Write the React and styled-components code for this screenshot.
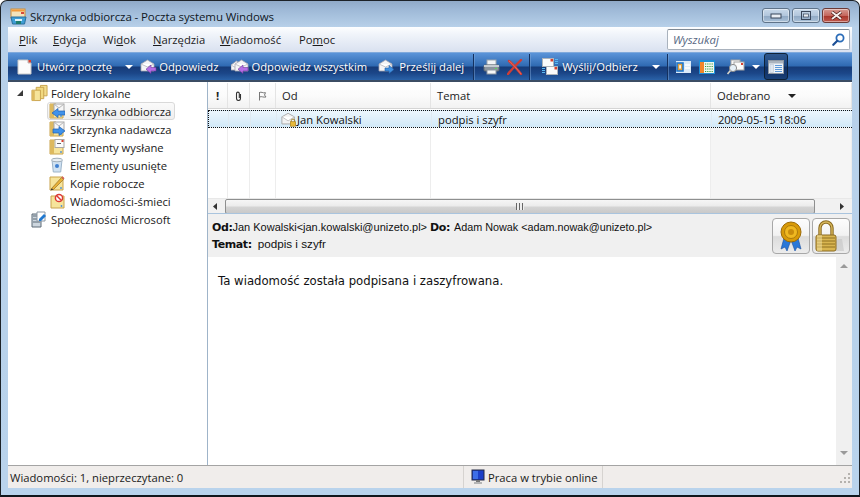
import React from "react";
import styled, { createGlobalStyle, css } from "styled-components";

const GlobalStyle = createGlobalStyle`
  html, body { margin: 0; padding: 0; height: 100%; background: #fff; overflow: hidden; }
  #root { height: 100%; }
  * { box-sizing: border-box; }
`;

const uiFont = `"Open Sans", "Noto Sans", "Liberation Sans", sans-serif`;

const Frame = styled.div`
  width: 860px;
  height: 497px;
  display: flex;
  flex-direction: column;
  border: 1px solid #1c2228;
  border-bottom: 2px solid #10161c;
  border-radius: 7px 7px 0 0;
  background: linear-gradient(180deg, #90aac8 0, #9db8d6 8px, #b7d0e9 26px, #b9d3ec 100%);
  padding: 0 7px 7px 7px;
  font-family: ${uiFont};
  font-size: 11.25px;
  color: #1a1a1a;
  overflow: hidden;
`;

const TitleBar = styled.div`
  height: 26px;
  flex: none;
  display: flex;
  align-items: center;
  padding: 4px 2px 0 2px;
`;

const TitleText = styled.div`
  margin-left: 3px;
  font-size: 11.5px;
  letter-spacing: -0.1px;
  color: #10181f;
  flex: 1;
`;

const WinButton = styled.div`
  width: 28px;
  height: 15px;
  margin-left: 2px;
  margin-top: -1px;
  border: 1px solid #5f7389;
  border-radius: 3px;
  display: flex;
  align-items: center;
  justify-content: center;
  background: linear-gradient(180deg, #c9d9ea 0, #b2c6dc 50%, #8fa8c3 52%, #a9c0d8 100%);
  box-shadow: inset 0 0 0 1px rgba(255, 255, 255, 0.45);
  ${(p) => p.$close && css`
    border-color: #6b3a36;
    background: linear-gradient(180deg, #d69a92 0, #c5675d 50%, #a8352b 52%, #c0584c 100%);
  `}
`;

const MenuRow = styled.div`
  height: 25px;
  flex: none;
  display: flex;
  align-items: center;
  background: linear-gradient(180deg, #fdfeff 0, #f0f4fa 30%, #d9e1f0 100%);
  padding-left: 11px;
  padding-right: 2px;
`;

const MenuItem = styled.span`
  width: ${(p) => p.$w}px;
  flex: none;
  color: #1b1b1b;
  u { text-underline-offset: 1px; }
`;

const SearchBox = styled.div`
  margin-left: auto;
  width: 183px;
  height: 21px;
  background: #fff;
  border: 1px solid #a9b2bd;
  border-top-color: #7f8994;
  border-radius: 2px;
  display: flex;
  align-items: center;
  justify-content: space-between;
  padding: 0 4px 0 5px;
  font-style: italic;
  color: #56667f;
`;

const Toolbar = styled.div`
  height: 30px;
  flex: none;
  display: flex;
  align-items: center;
  padding-left: 3px;
  color: #fff;
  border-top: 1px solid #7fa9dc;
  border-bottom: 2px solid #3b4c63;
  background: linear-gradient(180deg, #5b94d9 0, #2f6ab2 48%, #163b78 52%, #1b4688 75%, #2a62a8 100%);
`;

const ToolItem = styled.div`
  display: flex;
  align-items: center;
  gap: ${(p) => p.$gap ?? 3}px;
  margin-left: ${(p) => p.$ml ?? 0}px;
  white-space: nowrap;
  flex: none;
  text-shadow: 0 0 2px rgba(10, 30, 70, 0.6);
`;

const ToolSep = styled.div`
  width: 1px;
  height: 26px;
  flex: none;
  margin-left: ${(p) => p.$ml}px;
  background: #14315f;
  box-shadow: 1px 0 0 rgba(130, 170, 220, 0.45);
`;

const Caret = styled.span`
  flex: none;
  margin-left: ${(p) => p.$ml ?? 0}px;
  width: 0;
  height: 0;
  border-left: 4px solid transparent;
  border-right: 4px solid transparent;
  border-top: 4px solid ${(p) => p.$color ?? "#fff"};
`;

const ActiveTool = styled.div`
  width: 24px;
  height: 27px;
  flex: none;
  margin-left: ${(p) => p.$ml}px;
  display: flex;
  align-items: center;
  justify-content: center;
  border: 1px solid #0e2238;
  border-radius: 3px;
  background: rgba(12, 40, 84, 0.55);
`;

const Body = styled.div`
  flex: 1;
  min-height: 0;
  display: grid;
  grid-template-columns: 200px 1fr;
  background: #fff;
`;

const Sidebar = styled.div`
  border-right: 1px solid #9fb4c9;
  padding-top: 2px;
  background: #fff;
`;

const TreeRow = styled.div`
  height: 18px;
  display: flex;
  align-items: center;
  white-space: nowrap;
  gap: ${(p) => (p.$child ? 5 : 3)}px;
  margin-left: ${(p) => (p.$child ? 39 : 23)}px;
  padding-left: ${(p) => (p.$child ? 2 : 0)}px;
  width: ${(p) => (p.$selected ? "128px" : "auto")};
  ${(p) => p.$selected && css`
    background: linear-gradient(180deg, #fafafa, #efefef);
    border: 1px solid #d9d9d9;
    border-radius: 3px;
    padding-left: 1px;
  `}
`;

const TreeHead = styled.div`
  position: relative;
`;

const TreeArrow = styled.span`
  position: absolute;
  left: 9px;
  top: 6px;
  width: 0;
  height: 0;
  border-bottom: 6px solid #3a3a3a;
  border-left: 6px solid transparent;
`;

const Main = styled.div`
  min-width: 0;
  display: flex;
  flex-direction: column;
`;

const ListPane = styled.div`
  height: 116px;
  flex: none;
  display: flex;
  flex-direction: column;
  padding-top: 1px;
`;

const columns = "20px 22px 26px 155px 280px 1fr";

const HeadRow = styled.div`
  height: 26px;
  flex: none;
  display: grid;
  grid-template-columns: ${columns};
  background: linear-gradient(180deg, #fff 0, #fbfbfb 50%, #f2f2f2 100%);
  border-bottom: 1px solid #d5d5d5;
`;

const HeadCell = styled.div`
  display: flex;
  align-items: center;
  justify-content: ${(p) => (p.$center ? "center" : "flex-start")};
  padding-left: ${(p) => (p.$center ? 0 : 6)}px;
  border-right: 1px solid #e4e4e4;
  font-weight: ${(p) => (p.$bold ? 700 : 400)};
  color: #222;
`;

const MailRow = styled.div`
  height: 18px;
  flex: none;
  margin-top: 1px;
  display: grid;
  grid-template-columns: ${columns};
  background: linear-gradient(180deg, #ecf6fd 0, #d2e9f8 100%);
  border-top: 1px dotted #111;
  border-bottom: 1px dotted #111;
  border-left: 1px dotted #111;
`;

const MailCell = styled.div`
  display: flex;
  align-items: center;
  padding-left: ${(p) => p.$pl ?? 6}px;
  border-right: 1px solid ${(p) => (p.$plain ? "transparent" : "#dfeaf2")};
  white-space: nowrap;
  color: #111;
`;

const DateText = styled.span`
  letter-spacing: -0.15px;
`;

const FillRow = styled.div`
  flex: 1;
  display: grid;
  grid-template-columns: ${columns};
`;

const FillCell = styled.div`
  border-right: 1px solid #ededed;
  background: ${(p) => (p.$shade ? "#f5f5f5" : "#fff")};
`;

const HScroll = styled.div`
  height: 15px;
  flex: none;
  display: flex;
  align-items: center;
  background: #f1f1f1;
  border-top: 1px solid #e8e8e8;
`;

const ScrollArrowBox = styled.div`
  width: ${(p) => p.$w}px;
  flex: none;
  display: flex;
  align-items: center;
  justify-content: ${(p) => (p.$end ? "flex-end" : "center")};
  padding-right: ${(p) => (p.$end ? 3 : 0)}px;
`;

const HThumb = styled.div`
  flex: 1;
  height: 15px;
  border: 1px solid #8e8f8f;
  border-radius: 2px;
  background: linear-gradient(180deg, #f6f6f6 0, #ebebeb 48%, #d5d5d5 52%, #c9c9c9 100%);
  display: flex;
  align-items: center;
  justify-content: center;
`;

const Grip = styled.span`
  width: 8px;
  height: 7px;
  background: repeating-linear-gradient(90deg, #666 0, #666 1px, #eee 1px, #eee 3px);
`;

const Preview = styled.div`
  flex: 1;
  min-height: 0;
  display: flex;
  flex-direction: column;
  border-top: 1px solid #a9c4de;
`;

const PreviewHead = styled.div`
  height: 43px;
  flex: none;
  background: #f0f0f0;
  display: flex;
  justify-content: space-between;
  padding: 4px 2px 0 4px;
`;

const HeadLines = styled.div`
  display: flex;
  flex-direction: column;
  gap: 2px;
  padding-top: 3px;
  font-family: "Liberation Sans", Arial, sans-serif;
  font-size: 11px;
  color: #111;
`;

const HeadLine = styled.div`
  display: flex;
  align-items: baseline;
  height: 14px;
  white-space: nowrap;
`;

const Label = styled.b`
  font-family: "DejaVu Sans", sans-serif;
  font-size: 11px;
  font-weight: 700;
  margin-left: ${(p) => p.$ml ?? 0}px;
  margin-right: ${(p) => p.$mr ?? 0}px;
  letter-spacing: -0.4px;
`;

const RecipientText = styled.span`
  font-size: 10.8px;
`;

const SubjectText = styled.span`
  font-size: 11.7px;
`;

const Badges = styled.div`
  display: flex;
  gap: 2px;
`;

const Badge = styled.div`
  width: 38px;
  height: 36px;
  border: 1px solid #a8a8a8;
  border-radius: 4px;
  background: linear-gradient(180deg, #fdfdfd 0, #f2f2f2 48%, #dcdcdc 52%, #ececec 100%);
  display: flex;
  align-items: center;
  justify-content: center;
`;

const MessageWrap = styled.div`
  flex: 1;
  min-height: 0;
  display: flex;
`;

const MessageText = styled.div`
  flex: 1;
  padding: 17px 10px;
  font-family: "DejaVu Sans", sans-serif;
  font-size: 11.7px;
  color: #111;
`;

const VScroll = styled.div`
  width: 16px;
  flex: none;
  background: #f0f0f0;
  display: flex;
  flex-direction: column;
  justify-content: space-between;
  align-items: center;
  padding: 6px 0;
`;

const StatusBar = styled.div`
  height: 23px;
  flex: none;
  display: flex;
  align-items: center;
  background: #f0edeb;
  border-top: 1px solid #a4a4a4;
  position: relative;
  padding-left: 2px;
  color: #1a1a1a;
`;

const StatusPane = styled.div`
  width: ${(p) => p.$w}px;
  height: 100%;
  flex: none;
  display: flex;
  align-items: center;
  white-space: nowrap;
  gap: 1px;
  padding-left: ${(p) => p.$pl ?? 0}px;
  border-left: ${(p) => (p.$sep ? "1px solid #d6d3d0" : "none")};
  border-right: ${(p) => (p.$sep ? "1px solid #d6d3d0" : "none")};
`;

const Resize = styled.span`
  position: absolute;
  right: 1px;
  bottom: 1px;
`;

// ---- icons ----
const AppIcon = () => (
  <svg width="17" height="17" viewBox="0 0 17 17">
    <rect x="1" y="1" width="14" height="9" fill="#f3e3bb" stroke="#c98d3a" />
    <rect x="1.5" y="1.5" width="13" height="2" fill="#f29a3a" />
    <rect x="11" y="4" width="3" height="2" fill="#d8483a" />
    <path d="M1 9h15l-1.5 7h-12z" fill="#3f9fd6" stroke="#2a6f9c" />
    <rect x="5" y="11" width="7" height="2" fill="#dff3fb" />
    <rect x="6" y="13" width="5" height="3" fill="#1e7d6e" />
  </svg>
);

const Envelope = ({ x = 0, y = 0, w = 13, h = 10 }) => (
  <g>
    <path d={`M${x} ${y + 4}L${x + w / 2} ${y}L${x + w} ${y + 4}V${y + h}H${x}Z`} fill="#f4f4f6" stroke="#a4a4ae" strokeWidth="0.8" />
    <path d={`M${x} ${y + 4}L${x + w / 2} ${y + 7}L${x + w} ${y + 4}`} fill="#fff" stroke="#b5b5bd" strokeWidth="0.8" />
  </g>
);

const NewMail = () => (
  <svg width="15" height="16" viewBox="0 0 15 16">
    <path d="M1 1h10l3 3v11H1z" fill="#fbfbfb" stroke="#c9c9c9" />
    <path d="M11 1v3h3" fill="#dcdcdc" stroke="#bbb" />
    <rect x="11.5" y="1" width="2.5" height="2.5" fill="#d8402f" />
  </svg>
);

const ReplyIcon = ({ all, forward }) => (
  <svg width="19" height="16" viewBox="0 0 19 16">
    {all && <Envelope x={0} y={2} w={11} h={9} />}
    <Envelope x={all ? 4 : 2} y={1} w={13} h={11} />
    {forward ? (
      <path d="M8 9h4V6.5l5 4-5 4V12H8z" fill="#3f8fe0" stroke="#1e5ea8" strokeWidth="0.6" />
    ) : (
      <path d="M17 8.5h-5V6l-5 4.2 5 4.3V12h5z" fill="#b66ee6" stroke="#6f3a9a" strokeWidth="0.6" />
    )}
  </svg>
);

const PrintIcon = () => (
  <svg width="17" height="16" viewBox="0 0 17 16">
    <rect x="4" y="1" width="9" height="5" fill="#f2f4f6" stroke="#9aa4ae" />
    <rect x="1" y="6" width="15" height="6" rx="1" fill="#8a949e" stroke="#5f6972" />
    <rect x="1" y="6" width="15" height="2" fill="#c5cbd1" />
    <rect x="4" y="11" width="9" height="4" fill="#f6f6f6" stroke="#8e98a2" />
    <rect x="12" y="9" width="2" height="1" fill="#5bd65b" />
  </svg>
);

const DeleteIcon = () => (
  <svg width="16" height="16" viewBox="0 0 16 16">
    <path d="M2 2C6 5 10 10 14 15M14 1C10 5 5 10 1 15" stroke="#d03d35" strokeWidth="2.4" fill="none" strokeLinecap="round" />
    <path d="M2 2C6 5 10 10 14 15" stroke="#e9756c" strokeWidth="0.8" fill="none" />
  </svg>
);

const SendRecvIcon = () => (
  <svg width="17" height="17" viewBox="0 0 17 17">
    <rect x="0.5" y="0.5" width="11" height="8" fill="#fbfbfb" stroke="#aeb4ba" />
    <rect x="8.5" y="1" width="2.5" height="2.5" fill="#d8402f" />
    <rect x="4.5" y="8.5" width="11" height="8" fill="#fbfbfb" stroke="#aeb4ba" />
    <rect x="12.5" y="9" width="2.5" height="2.5" fill="#d8402f" />
    <path d="M13 1.5h3M13 3.5h3M13 5.5h3M0 10.5h3M0 12.5h3M0 14.5h3" stroke="#58b8f0" strokeWidth="1" />
  </svg>
);

const ContactsIcon = () => (
  <svg width="15" height="12" viewBox="0 0 15 12">
    <rect x="0" y="0" width="15" height="12" fill="#dcebf8" />
    <rect x="1" y="2" width="6" height="8" fill="#e2a13c" stroke="#1f78d0" strokeWidth="1.6" />
    <rect x="3.2" y="4.2" width="1.8" height="3.4" fill="#f4f4f4" />
    <path d="M9 4h5M9 7h5" stroke="#fff" strokeWidth="1.4" />
  </svg>
);

const CalendarIcon = () => (
  <svg width="16" height="14" viewBox="0 0 16 14">
    <rect x="0" y="0" width="16" height="14" fill="#1d8fd8" />
    <rect x="1" y="2" width="4" height="11" fill="#f0862a" />
    <rect x="5" y="2" width="10" height="11" fill="#eef7ee" />
    <path d="M6 4h8M6 6.5h8M6 9h8M6 11.5h8" stroke="#2f9a3e" strokeWidth="1.2" strokeDasharray="1.2 1" />
  </svg>
);

const FindIcon = () => (
  <svg width="18" height="16" viewBox="0 0 18 16">
    <rect x="4" y="1" width="9" height="8" fill="#f6f6f6" stroke="#a5a5a5" />
    <rect x="7" y="3" width="10" height="8" fill="#fbfbfb" stroke="#a5a5a5" />
    <rect x="14" y="4" width="2" height="2" fill="#d8402f" />
    <circle cx="6" cy="9" r="3.6" fill="#e6f0f8" stroke="#8a8a8a" />
    <path d="M3.5 11.5L0.5 15" stroke="#d8d4c8" strokeWidth="1.6" />
  </svg>
);

const LayoutIcon = () => (
  <svg width="16" height="14" viewBox="0 0 16 14">
    <rect x="0.5" y="0.5" width="15" height="13" fill="#eef3f9" stroke="#8d97a3" />
    <rect x="1" y="1" width="14" height="2.5" fill="#aab3bd" />
    <rect x="2" y="4.5" width="3.5" height="8" fill="#dfe7f0" stroke="#b5c0cc" strokeWidth="0.5" />
    <path d="M7 5.5h7M7 7.5h7M7 9.5h7M7 11.5h7" stroke="#5f9ad8" strokeWidth="1" />
  </svg>
);

const FolderBase = () => (
  <>
    <path d="M1 1h6l1 1h6v13H1z" fill="#f6e49b" stroke="#c9a34c" />
    <path d="M1 1h4v14H1z" fill="#ddb95f" />
    <circle cx="12" cy="13" r="0.9" fill="#4a90d8" />
  </>
);

const FoldersIcon = () => (
  <svg width="17" height="18" viewBox="0 0 18 18">
    <path d="M10 1h7v11h-7z" fill="#f3dd8c" stroke="#c9a34c" />
    <path d="M5.5 3h8v12h-8z" fill="#f1d97f" stroke="#c9a34c" />
    <path d="M1 6h9v11H1z" fill="#f6e49b" stroke="#c9a34c" />
    <path d="M1 6h3v11H1z" fill="#ddb95f" />
  </svg>
);

const InboxIcon = ({ out }) => (
  <svg width="16" height="16" viewBox="0 0 16 16">
    <FolderBase />
    <rect x="5" y="1" width="10" height="8" fill="#f6f6f6" stroke="#a8a8a8" />
    <path d="M5 1l5 4 5-4" fill="none" stroke="#b5b5b5" />
    {out ? (
      <path d="M4 8h6V5.5l6 4.5-6 4.5V12H4z" fill="#3f92ea" stroke="#1c5fb2" strokeWidth="0.7" />
    ) : (
      <path d="M16 8h-7V5.5L3 10l6 4.5V12h7z" fill="#3f92ea" stroke="#1c5fb2" strokeWidth="0.7" />
    )}
  </svg>
);

const SentIcon = () => (
  <svg width="16" height="16" viewBox="0 0 16 16">
    <FolderBase />
    <rect x="6" y="0.5" width="9" height="8" fill="#fcfcfc" stroke="#a8a8a8" />
    <rect x="12.5" y="1" width="2" height="2" fill="#d8402f" />
    <rect x="8" y="4" width="4" height="1" fill="#666" />
  </svg>
);

const TrashIcon = () => (
  <svg width="16" height="16" viewBox="0 0 16 16">
    <path d="M3 3h10l-1.3 12H4.3z" fill="#cfe1f2" stroke="#9db4c9" />
    <ellipse cx="8" cy="3" rx="5.5" ry="1.8" fill="#e8eef4" stroke="#a2afba" />
    <circle cx="8" cy="9" r="2" fill="#3f7fd0" />
  </svg>
);

const DraftIcon = () => (
  <svg width="16" height="16" viewBox="0 0 16 16">
    <path d="M1 2h13v13H1z" fill="#f6e49b" stroke="#c9a34c" />
    <circle cx="12" cy="13" r="0.9" fill="#4a90d8" />
    <path d="M2.5 13.5L12.5 2.5l2 2-10 10z" fill="#e8b23a" stroke="#8a6418" strokeWidth="0.6" />
    <path d="M12.5 2.5l2 2 1-1.2-2-2z" fill="#d8605a" />
    <path d="M2.5 13.5l-1 2 3-1z" fill="#333" />
  </svg>
);

const JunkIcon = () => (
  <svg width="16" height="16" viewBox="0 0 16 16">
    <path d="M2 3h13v12H2z" fill="#f6e49b" stroke="#c9a34c" />
    <circle cx="12.5" cy="13" r="0.9" fill="#4a90d8" />
    <circle cx="10" cy="5" r="3.6" fill="#fff" stroke="#dc3a34" strokeWidth="1.5" />
    <path d="M7.5 2.5l5 5" stroke="#dc3a34" strokeWidth="1.5" />
  </svg>
);

const CommunityIcon = () => (
  <svg width="17" height="17" viewBox="0 0 17 17">
    <path d="M1 3h9v13H1z" fill="#cdd6de" stroke="#5d6a76" />
    <path d="M2 5h7M2 8h7M2 11h7" stroke="#5d6a76" strokeWidth="1" />
    <path d="M6 1h8v9H6z" fill="#fff" stroke="#8b97a3" />
    <path d="M8 8l5-5 2 2-5 5H8z" fill="#1f78d0" />
  </svg>
);

const MailLockIcon = () => (
  <svg width="16" height="15" viewBox="0 0 18 16">
    <path d="M1 5L8 1l7 4v8H1z" fill="#f2f2f2" stroke="#a5a5a5" />
    <path d="M1 5l7 4.5L15 5" fill="#fff" stroke="#bdbdbd" />
    <path d="M11.5 11V9.5a2 2 0 0 1 4 0V11" fill="none" stroke="#9b7a20" />
    <rect x="10.5" y="10.5" width="6" height="5" fill="#e8b93a" stroke="#a57d18" strokeWidth="0.7" />
  </svg>
);

const Magnifier = () => (
  <svg width="13" height="13" viewBox="0 0 13 13">
    <circle cx="8" cy="5" r="3.6" fill="#fff" stroke="#2b6cb8" strokeWidth="1.8" />
    <path d="M5.3 7.8L1.3 11.8" stroke="#1d4f95" strokeWidth="2.2" strokeLinecap="round" />
  </svg>
);

const ClipIcon = () => (
  <svg width="7" height="10" viewBox="0 0 7 10">
    <path d="M5.5 3v4.5a2 2 0 0 1-4 0V2.5a1.4 1.4 0 0 1 2.8 0V7" fill="none" stroke="#333" strokeWidth="1.1" />
  </svg>
);

const FlagIcon = () => (
  <svg width="10" height="10" viewBox="0 0 10 10">
    <path d="M1.5 1v8.5M1.5 1.5c2-1 3 .8 6 .2L6.5 4l1.5 2c-3 .6-4-1-6.5 0" fill="none" stroke="#777" strokeWidth="1" />
  </svg>
);

const Rosette = () => (
  <svg width="34" height="34" viewBox="0 0 34 34">
    <path d="M10 19L7 30l4-2 2 4 4-11zM24 19l3 11-4-2-2 4-4-11z" fill="#2a78d8" stroke="#174e9e" strokeWidth="0.6" />
    <circle cx="17" cy="13" r="10" fill="#d89a08" stroke="#9c6a06" />
    <circle cx="17" cy="13" r="6.5" fill="#efb820" stroke="#ad7a0c" />
    <circle cx="17" cy="13" r="3" fill="#c98c0c" />
  </svg>
);

const Lock = () => (
  <svg width="34" height="34" viewBox="0 0 34 34">
    <path d="M24 20h4l2 12H14z" fill="#bdbdbd" opacity="0.5" />
    <path d="M6 17V9a6 6 0 0 1 12 0v8" fill="none" stroke="#8a6a20" strokeWidth="3.4" />
    <path d="M6 17V9a6 6 0 0 1 12 0v8" fill="none" stroke="#d6b65a" strokeWidth="1.4" />
    <rect x="2" y="16" width="20" height="16" rx="2" fill="#d9b550" stroke="#8a6a20" />
    <path d="M3 19h18M3 22h18M3 25h18M3 28h18" stroke="#8f7020" strokeWidth="1" />
    <rect x="3" y="16" width="5" height="16" fill="#f6e6a8" opacity="0.5" />
  </svg>
);

const MonitorIcon = () => (
  <svg width="16" height="16" viewBox="0 0 16 16">
    <rect x="1" y="1" width="12" height="10" fill="#1c3fc8" stroke="#232a44" />
    <path d="M2 2h5v8H2z" fill="#3d6ee8" />
    <rect x="5" y="11" width="4" height="2" fill="#777" />
    <rect x="3" y="13" width="8" height="2" fill="#b5b5b5" />
  </svg>
);

const MinGlyph = () => (
  <svg width="12" height="7" viewBox="0 0 12 7">
    <rect x="1" y="2" width="10" height="4" fill="#e9eef4" stroke="#39465a" />
  </svg>
);

const MaxGlyph = () => (
  <svg width="10" height="9" viewBox="0 0 10 9">
    <rect x="0.5" y="0.5" width="9" height="8" fill="none" stroke="#39465a" strokeWidth="1" />
    <rect x="2.5" y="3" width="5" height="3" fill="#e9eef4" stroke="#39465a" strokeWidth="0.7" />
  </svg>
);

const CloseGlyph = () => (
  <svg width="13" height="9" viewBox="0 0 13 9">
    <path d="M2 1l9 7M11 1L2 8" stroke="#3a1512" strokeWidth="3.2" />
    <path d="M2 1l9 7M11 1L2 8" stroke="#f6ecea" strokeWidth="2" />
  </svg>
);

const SmallArrow = ({ dir }) => {
  const d = { left: "M5 1L1 4.5 5 8z", right: "M1 1l4 3.5L1 8z", up: "M1 5l4-4 4 4z", down: "M1 1l4 4 4-4z" }[dir];
  return (
    <svg width="10" height="9" viewBox="0 0 10 9">
      <path d={d} fill={dir === "up" || dir === "down" ? "#9a9a9a" : "#333"} />
    </svg>
  );
};

const ResizeGrip = () => (
  <svg width="11" height="11" viewBox="0 0 11 11" fill="#b5b2ae">
    <rect x="8" y="8" width="2" height="2" />
    <rect x="4" y="8" width="2" height="2" />
    <rect x="0" y="8" width="2" height="2" />
    <rect x="8" y="4" width="2" height="2" />
    <rect x="4" y="4" width="2" height="2" />
    <rect x="8" y="0" width="2" height="2" />
  </svg>
);

const menu = [
  { w: 34, label: <><u>P</u>lik</> },
  { w: 50, label: <><u>E</u>dycja</> },
  { w: 50, label: <>Wi<u>d</u>ok</> },
  { w: 67, label: <><u>N</u>arzędzia</> },
  { w: 79, label: <><u>W</u>iadomość</> },
  { w: 50, label: <>Po<u>m</u>oc</> },
];

const folders = [
  { icon: <InboxIcon />, name: "Skrzynka odbiorcza", selected: true },
  { icon: <InboxIcon out />, name: "Skrzynka nadawcza" },
  { icon: <SentIcon />, name: "Elementy wysłane" },
  { icon: <TrashIcon />, name: "Elementy usunięte" },
  { icon: <DraftIcon />, name: "Kopie robocze" },
  { icon: <JunkIcon />, name: "Wiadomości-śmieci" },
];

export default function App() {
  return (
    <>
      <GlobalStyle />
      <Frame>
        <TitleBar>
          <AppIcon />
          <TitleText>Skrzynka odbiorcza - Poczta systemu Windows</TitleText>
          <WinButton><MinGlyph /></WinButton>
          <WinButton><MaxGlyph /></WinButton>
          <WinButton $close><CloseGlyph /></WinButton>
        </TitleBar>

        <MenuRow>
          {menu.map((m, i) => (
            <MenuItem key={i} $w={m.w}>{m.label}</MenuItem>
          ))}
          <SearchBox>
            Wyszukaj
            <Magnifier />
          </SearchBox>
        </MenuRow>

        <Toolbar>
          <ToolItem $ml={6} $gap={5}><NewMail />Utwórz pocztę</ToolItem>
          <Caret $ml={13} />
          <ToolItem $ml={6} $gap={1}><ReplyIcon />Odpowiedz</ToolItem>
          <ToolItem $ml={13} $gap={1}><ReplyIcon all />Odpowiedz wszystkim</ToolItem>
          <ToolItem $ml={10}><ReplyIcon forward />Prześlij dalej</ToolItem>
          <ToolSep $ml={9} />
          <ToolItem $ml={9}><PrintIcon /></ToolItem>
          <ToolItem $ml={7}><DeleteIcon /></ToolItem>
          <ToolSep $ml={6} />
          <ToolItem $ml={12} $gap={3}><SendRecvIcon />Wyślij/Odbierz</ToolItem>
          <Caret $ml={14} />
          <ToolSep $ml={7} />
          <ToolItem $ml={8}><ContactsIcon /></ToolItem>
          <ToolItem $ml={8}><CalendarIcon /></ToolItem>
          <ToolItem $ml={12}><FindIcon /></ToolItem>
          <Caret $ml={7} />
          <ActiveTool $ml={4}><LayoutIcon /></ActiveTool>
        </Toolbar>

        <Body>
          <Sidebar>
            <TreeHead>
              <TreeArrow />
              <TreeRow><FoldersIcon />Foldery lokalne</TreeRow>
            </TreeHead>
            {folders.map((f) => (
              <TreeRow key={f.name} $child $selected={f.selected}>
                {f.icon}
                {f.name}
              </TreeRow>
            ))}
            <TreeRow><CommunityIcon />Społeczności Microsoft</TreeRow>
          </Sidebar>

          <Main>
            <ListPane>
              <HeadRow>
                <HeadCell $center $bold>!</HeadCell>
                <HeadCell $center><ClipIcon /></HeadCell>
                <HeadCell $center><FlagIcon /></HeadCell>
                <HeadCell>Od</HeadCell>
                <HeadCell>Temat</HeadCell>
                <HeadCell>
                  Odebrano
                  <Caret $ml={18} $color="#222" />
                </HeadCell>
              </HeadRow>
              <MailRow>
                <MailCell />
                <MailCell />
                <MailCell />
                <MailCell $pl={4}><MailLockIcon />Jan Kowalski</MailCell>
                <MailCell>podpis i szyfr</MailCell>
                <MailCell $plain><DateText>2009-05-15 18:06</DateText></MailCell>
              </MailRow>
              <FillRow>
                <FillCell />
                <FillCell />
                <FillCell />
                <FillCell />
                <FillCell />
                <FillCell $shade />
              </FillRow>
            </ListPane>

            <HScroll>
              <ScrollArrowBox $w={17}><SmallArrow dir="left" /></ScrollArrowBox>
              <HThumb><Grip /></HThumb>
              <ScrollArrowBox $w={37} $end><SmallArrow dir="right" /></ScrollArrowBox>
            </HScroll>

            <Preview>
              <PreviewHead>
                <HeadLines>
                  <HeadLine>
                    <Label>Od:</Label>
                    Jan Kowalski&lt;jan.kowalski@unizeto.pl&gt;
                    <Label $ml={3} $mr={4}>Do:</Label>
                    <RecipientText>Adam Nowak &lt;adam.nowak@unizeto.pl&gt;</RecipientText>
                  </HeadLine>
                  <HeadLine>
                    <Label $mr={6}>Temat:</Label>
                    <SubjectText>podpis i szyfr</SubjectText>
                  </HeadLine>
                </HeadLines>
                <Badges>
                  <Badge><Rosette /></Badge>
                  <Badge><Lock /></Badge>
                </Badges>
              </PreviewHead>
              <MessageWrap>
                <MessageText>Ta wiadomość została podpisana i zaszyfrowana.</MessageText>
                <VScroll>
                  <SmallArrow dir="up" />
                  <SmallArrow dir="down" />
                </VScroll>
              </MessageWrap>
            </Preview>
          </Main>
        </Body>

        <StatusBar>
          <StatusPane $w={453}>Wiadomości: 1, nieprzeczytane: 0</StatusPane>
          <StatusPane $w={140} $pl={7} $sep><MonitorIcon />Praca w trybie online</StatusPane>
          <Resize><ResizeGrip /></Resize>
        </StatusBar>
      </Frame>
    </>
  );
}
